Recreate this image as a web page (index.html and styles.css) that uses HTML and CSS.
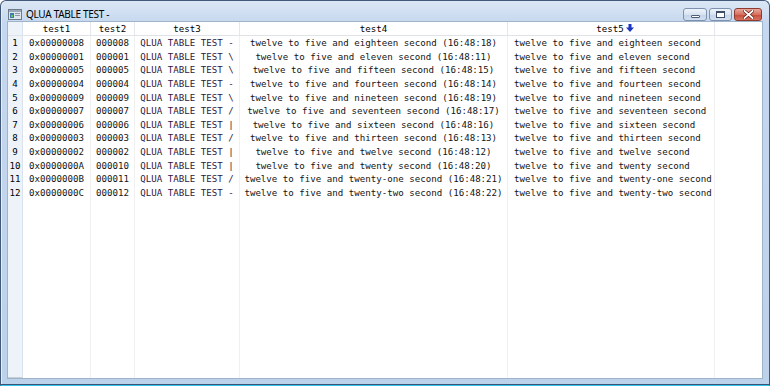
FILE: index.html
```html
<!DOCTYPE html>
<html>
<head>
<meta charset="utf-8">
<title>QLUA TABLE TEST</title>
<link rel="stylesheet" href="styles.css">
</head>
<body>
<div class="window">
  <div class="titlebar">
    <svg class="app-icon" width="14" height="11" viewBox="0 0 14 11">
      <rect x="0.5" y="0.5" width="13" height="10" fill="#dfe5ec" stroke="#6e7b8a"/>
      <rect x="1" y="1" width="12" height="2" fill="#9aa8b8"/>
      <rect x="2" y="4" width="4" height="5" fill="#3d7fa8"/>
      <rect x="3" y="6" width="2" height="2" fill="#6cbf5a"/>
      <rect x="7" y="4" width="5" height="1" fill="#8c98a6"/>
      <rect x="7" y="6" width="5" height="1" fill="#8c98a6"/>
    </svg>
    <span class="title">QLUA TABLE TEST -</span>
    <div class="controls">
      <div class="wbtn min"><span class="glyph-min"></span></div>
      <div class="wbtn max"><span class="glyph-max"></span></div>
      <div class="wbtn close">
        <svg width="11" height="9" viewBox="0 0 11 9"><path d="M1.5 1 L9.5 8 M9.5 1 L1.5 8" stroke="#5b1a12" stroke-width="3.2" stroke-linecap="square"/><path d="M1.5 1 L9.5 8 M9.5 1 L1.5 8" stroke="#ffffff" stroke-width="1.8" stroke-linecap="square"/></svg>
      </div>
    </div>
  </div>
  <div class="client">
    <div class="grid">
      <div class="hd corner"></div>
      <div class="hd">test1</div>
      <div class="hd">test2</div>
      <div class="hd">test3</div>
      <div class="hd">test4</div>
      <div class="hd sorted">test5<svg class="sort" width="8" height="8" viewBox="0 0 8 8"><path d="M2.5 0h3v3.5h2.5l-4 4.5-4-4.5h2.5z" fill="#1b35c4"/></svg></div>
      <div class="hd filler"></div>

      <div class="rn">1</div><div class="c">0x00000008</div><div class="c">000008</div><div class="c t3">QLUA TABLE TEST -</div><div class="c">twelve to five and eighteen second (16:48:18)</div><div class="c l">twelve to five and eighteen second</div><div class="c"></div>
      <div class="rn">2</div><div class="c">0x00000001</div><div class="c">000001</div><div class="c t3">QLUA TABLE TEST \</div><div class="c">twelve to five and eleven second (16:48:11)</div><div class="c l">twelve to five and eleven second</div><div class="c"></div>
      <div class="rn">3</div><div class="c">0x00000005</div><div class="c">000005</div><div class="c t3">QLUA TABLE TEST \</div><div class="c">twelve to five and fifteen second (16:48:15)</div><div class="c l">twelve to five and fifteen second</div><div class="c"></div>
      <div class="rn">4</div><div class="c">0x00000004</div><div class="c">000004</div><div class="c t3">QLUA TABLE TEST -</div><div class="c">twelve to five and fourteen second (16:48:14)</div><div class="c l">twelve to five and fourteen second</div><div class="c"></div>
      <div class="rn">5</div><div class="c">0x00000009</div><div class="c">000009</div><div class="c t3">QLUA TABLE TEST \</div><div class="c">twelve to five and nineteen second (16:48:19)</div><div class="c l">twelve to five and nineteen second</div><div class="c"></div>
      <div class="rn">6</div><div class="c">0x00000007</div><div class="c">000007</div><div class="c t3">QLUA TABLE TEST /</div><div class="c">twelve to five and seventeen second (16:48:17)</div><div class="c l">twelve to five and seventeen second</div><div class="c"></div>
      <div class="rn">7</div><div class="c">0x00000006</div><div class="c">000006</div><div class="c t3">QLUA TABLE TEST |</div><div class="c">twelve to five and sixteen second (16:48:16)</div><div class="c l">twelve to five and sixteen second</div><div class="c"></div>
      <div class="rn">8</div><div class="c">0x00000003</div><div class="c">000003</div><div class="c t3">QLUA TABLE TEST /</div><div class="c">twelve to five and thirteen second (16:48:13)</div><div class="c l">twelve to five and thirteen second</div><div class="c"></div>
      <div class="rn">9</div><div class="c">0x00000002</div><div class="c">000002</div><div class="c t3">QLUA TABLE TEST |</div><div class="c">twelve to five and twelve second (16:48:12)</div><div class="c l">twelve to five and twelve second</div><div class="c"></div>
      <div class="rn">10</div><div class="c">0x0000000A</div><div class="c">000010</div><div class="c t3">QLUA TABLE TEST |</div><div class="c">twelve to five and twenty second (16:48:20)</div><div class="c l">twelve to five and twenty second</div><div class="c"></div>
      <div class="rn">11</div><div class="c">0x0000000B</div><div class="c">000011</div><div class="c t3">QLUA TABLE TEST /</div><div class="c">twelve to five and twenty-one second (16:48:21)</div><div class="c l">twelve to five and twenty-one second</div><div class="c"></div>
      <div class="rn">12</div><div class="c">0x0000000C</div><div class="c">000012</div><div class="c t3">QLUA TABLE TEST -</div><div class="c">twelve to five and twenty-two second (16:48:22)</div><div class="c l">twelve to five and twenty-two second</div><div class="c"></div>

      <div class="rn rest"></div><div class="c"></div><div class="c"></div><div class="c"></div><div class="c"></div><div class="c"></div><div class="c"></div>
    </div>
  </div>
</div>
</body>
</html>
```

FILE: styles.css
```css
html, body {
  margin: 0;
  padding: 0;
  background: #ffffff;
}

.window {
  box-sizing: border-box;
  width: 770px;
  height: 386px;
  display: flex;
  flex-direction: column;
  border: 1px solid #43597a;
  border-bottom-color: #2fc4ee;
  border-radius: 6px 6px 0 0;
  background: linear-gradient(to bottom, #dbe7f5 0px, #c6d8ef 22px, #bcd1ea 100%);
  box-shadow: inset 0 -1px 0 #3b5475, inset 1px 0 0 #e4edf8;
  overflow: hidden;
}

.titlebar {
  height: 20px;
  flex: none;
  display: flex;
  align-items: flex-start;
  padding-left: 7px;
  padding-right: 6px;
}

.app-icon {
  flex: none;
  margin-top: 8px;
}

.title {
  margin-left: 4px;
  margin-top: 6px;
  font-family: "Noto Sans", "Open Sans", sans-serif;
  font-size: 10px;
  line-height: 14px;
  letter-spacing: -0.3px;
  color: #000000;
  white-space: nowrap;
}

.controls {
  margin-left: auto;
  display: flex;
  gap: 2px;
  margin-top: 7px;
  margin-right: 1px;
}

.wbtn {
  box-sizing: border-box;
  height: 13px;
  border: 1px solid #7e92ad;
  border-radius: 3px;
  display: flex;
  align-items: center;
  justify-content: center;
  background: linear-gradient(to bottom, #eef3fa 0%, #d8e3f1 50%, #c3d3e9 51%, #d2dff0 100%);
}

.min { width: 24px; }
.max { width: 23px; }
.close {
  width: 28px;
  border-color: #8c3b30;
  background: linear-gradient(to bottom, #e9a89c 0%, #d6705f 50%, #c44a38 51%, #d7735f 100%);
}

.glyph-min {
  width: 9px;
  height: 3px;
  margin-top: 3px;
  background: #ffffff;
  border: 1px solid #4d5d74;
  box-sizing: border-box;
  border-radius: 1px;
}

.glyph-max {
  width: 9px;
  height: 7px;
  box-sizing: border-box;
  border: 1px solid #3d4c62;
  border-top-width: 2px;
  background: #ffffff;
}

.client {
  flex: 1;
  margin: 0 6px 6px 6px;
  border: 1px solid #9fb3cb;
  background: #ffffff;
  display: flex;
  min-height: 0;
}

.grid {
  flex: 1;
  display: grid;
  grid-template-columns: 15px 68px 44px 105px 268px 207px 1fr;
  grid-template-rows: 14px repeat(12, 13.65px) 1fr;
  font-family: "DejaVu Sans Mono", "Liberation Mono", monospace;
  font-size: 9.14px;
  color: #141414;
}

.hd {
  box-sizing: border-box;
  border-right: 1px solid #e4e8ee;
  border-bottom: 1px solid #dfe3e8;
  background: #ffffff;
  text-align: center;
  line-height: 13px;
  padding-top: 1px;
  white-space: pre;
  color: #000000;
}

.hd.corner {
  background: #eef3fa;
  border-right-color: #d9e2ee;
}

.hd.filler {
  border-right: none;
}

.hd.sorted {
  padding-left: 8px;
  display: flex;
  align-items: center;
  justify-content: center;
}

.sort {
  margin-left: 2px;
  margin-bottom: 2px;
}

.rn {
  box-sizing: border-box;
  background: #eef3fa;
  border-right: 1px solid #d9e2ee;
  text-align: center;
  line-height: 13px;
  padding-top: 1px;
  color: #000000;
}

.rn.rest {
  border-bottom: 1px solid #c9ced6;
}

.c {
  box-sizing: border-box;
  border-right: 1px solid #f0f0f0;
  text-align: center;
  line-height: 13px;
  padding-top: 1px;
  white-space: pre;
  overflow: hidden;
}

.c:nth-child(7n) {
  border-right: none;
}

.c.l {
  text-align: left;
  padding-left: 6px;
}

.c.t3 {
  color: #30183c;
}
```
